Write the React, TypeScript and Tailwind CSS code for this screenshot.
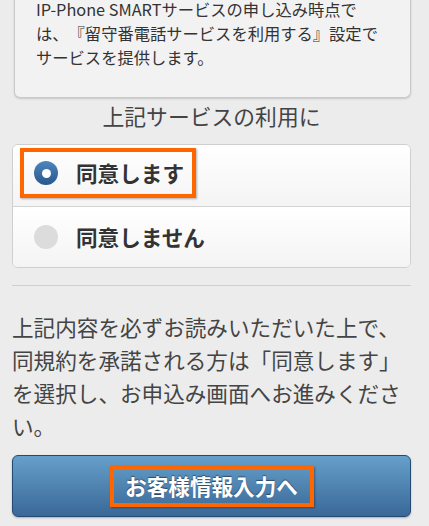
import React from 'react';

const font = { fontFamily: '"Noto Sans CJK JP", "Noto Sans", sans-serif' };

const App: React.FC = () => {
  return (
    <div
      className="h-[526px] w-full overflow-hidden bg-[#ececec] pl-3 pr-[18px] text-[#333] [text-spacing-trim:space-all]"
      style={font}
    >
      {/* notice card, top part scrolled off */}
      <div className="-mt-[3px] ml-[2px] rounded-b-md border border-t-0 border-[#c9c9c9] bg-[#f2f2f2] pb-[28px] pl-[21px] pr-3 text-[16.3px] leading-[24px] text-[#333] shadow-[0_1px_2px_rgba(0,0,0,0.15)]">
        IP-Phone SMARTサービスの申し込み時点で
        <br />
        は、『留守番電話サービスを利用する』設定で
        <br />
        サービスを提供します。
      </div>

      <h2 className="mt-[2px] mb-[12px] text-center text-[21.8px] leading-[32px] text-[#444]">
        上記サービスの利用に
      </h2>

      <div className="overflow-hidden rounded-md border border-[#cfcfcf] bg-white">
        <label className="flex h-[61px] items-start bg-gradient-to-b from-white to-[#f4f4f4] px-[7px] pt-[3px]">
          <span className="flex h-[50px] items-center border-4 border-[#ff6600] pl-[10px] pr-2 shadow-[1px_1px_2px_rgba(0,0,0,0.3)]">
            <span className="flex h-6 w-6 items-center justify-center rounded-full bg-gradient-to-b from-[#4f86bd] to-[#28588c]">
              <span className="h-[9px] w-[9px] rounded-full bg-white" />
            </span>
            <span className="ml-[18px] text-[21.6px] font-bold leading-none text-[#333]">同意します</span>
          </span>
        </label>
        <label className="flex h-[61px] items-center border-t border-[#d4d4d4] bg-gradient-to-b from-white to-[#f4f4f4] pl-[21px]">
          <span className="h-6 w-6 rounded-full bg-[#dcdcdc]" />
          <span className="ml-[18px] text-[21.6px] font-bold leading-none text-[#333]">同意しません</span>
        </label>
      </div>

      <hr className="mt-[17px] border-t border-[#cfcfcf]" />

      <p className="mt-[24px] text-[21.6px] leading-[33px] text-[#444]">
        上記内容を必ずお読みいただいた上で、
        <br />
        同規約を承諾される方は「同意します」
        <br />
        を選択し、お申込み画面へお進みくださ
        <br />
        い。
      </p>

      <button
        type="button"
        className="mt-[13px] flex h-[62px] w-full items-start justify-center rounded-md border border-[#234a72] bg-gradient-to-b from-[#66a0ca] to-[#3a6898] pt-[10px] shadow-[0_1px_2px_rgba(0,0,0,0.25)]"
      >
        <span className="flex h-[41px] w-[204px] items-center justify-center border-4 border-[#ff6600] text-[21.6px] font-bold text-white shadow-[1px_1px_2px_rgba(0,0,0,0.35)] [text-shadow:0_-1px_1px_rgba(0,0,0,0.45)]">
          お客様情報入力へ
        </span>
      </button>
    </div>
  );
};

export default App;
